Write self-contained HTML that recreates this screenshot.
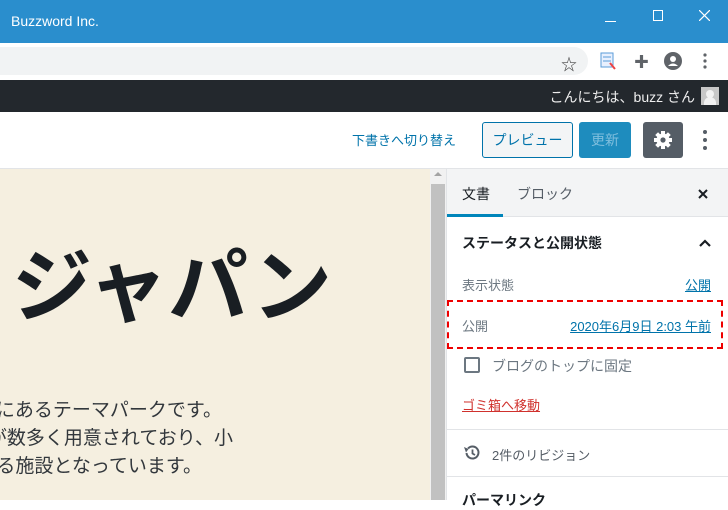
<!DOCTYPE html>
<html><head><meta charset="utf-8"><style>
*{margin:0;padding:0;box-sizing:border-box}
body{width:728px;height:500px;overflow:hidden;position:relative;background:#fff;font-family:"Liberation Sans","Noto Sans CJK JP",sans-serif}
.a{position:absolute}
.title{left:0;top:0;width:728px;height:43px;background:#2a8ecd;color:#fff}
.tool{left:0;top:43px;width:728px;height:37px;background:#fff}
.admin{left:0;top:80px;width:728px;height:32px;background:#23282d;color:#eee;font-size:14px}
.hdr{left:0;top:112px;width:728px;height:57px;background:#fff;border-bottom:1px solid #e2e4e7}
.content{left:0;top:169px;width:430px;height:331px;background:#f5efe0}
.side{left:446px;top:169px;width:282px;height:331px;background:#fff;border-left:1px solid #e2e4e7}
.jp{white-space:nowrap}
</style></head><body>
<div class="a title">
 <div class="a" style="left:11px;top:13px;font-size:14px">Buzzword Inc.</div>
 <div class="a" style="left:605px;top:21px;width:11px;height:1px;background:#fff"></div>
 <div class="a" style="left:653px;top:10px;width:10px;height:11px;border:1px solid #fff"></div>
 <svg class="a" style="left:699px;top:10px" width="11" height="11"><path d="M0 0L11 11M11 0L0 11" stroke="#fff" stroke-width="1.2"/></svg>
</div>
<div class="a tool">
 <div class="a" style="left:-20px;top:4px;width:608px;height:28px;background:#f1f3f4;border-radius:14px"></div>
 <div class="a" style="left:561px;top:8px;font-size:16px;color:#444">☆</div>
 <svg class="a" style="left:600px;top:9px" width="16" height="18"><rect x="1" y="1" width="12" height="14" fill="#e8f0fe" stroke="#5a9bd8"/><line x1="3" y1="5" x2="11" y2="5" stroke="#5a9bd8"/><line x1="3" y1="9" x2="11" y2="9" stroke="#5a9bd8"/><path d="M10 11L15 17" stroke="#e44" stroke-width="2"/></svg>
 <div class="a" style="left:634px;top:8px;font-size:15px;color:#5f6368">✚</div>
 <svg class="a" style="left:664px;top:9px" width="18" height="18"><circle cx="9" cy="9" r="9" fill="#5f6368"/><circle cx="9" cy="7" r="3" fill="#fff"/><path d="M4 14Q9 9 14 14" fill="#fff"/></svg>
 <svg class="a" style="left:703px;top:10px" width="4" height="16"><circle cx="2" cy="2" r="1.6" fill="#5f6368"/><circle cx="2" cy="8" r="1.6" fill="#5f6368"/><circle cx="2" cy="14" r="1.6" fill="#5f6368"/></svg>
</div>
<div class="a admin">
 <div class="a jp" style="right:33px;top:7px">こんにちは、buzz さん</div>
 <div class="a" style="left:701px;top:7px;width:18px;height:18px;background:#c8c8c8"><div class="a" style="left:5px;top:3px;width:8px;height:8px;border-radius:50%;background:#f2f2f2"></div><div class="a" style="left:3px;top:10px;width:12px;height:8px;border-radius:6px 6px 0 0;background:#f2f2f2"></div></div>
</div>
<div class="a hdr">
 <div class="a jp" style="left:352px;top:18px;font-size:13px;color:#0073aa">下書きへ切り替え</div>
 <div class="a jp" style="left:482px;top:10px;width:91px;height:36px;border:1px solid #0073aa;border-radius:3px;background:#f3f5f6;color:#0073aa;font-size:14px;text-align:center;line-height:34px">プレビュー</div>
 <div class="a jp" style="left:579px;top:10px;width:52px;height:36px;border-radius:3px;background:#1e8cbe;color:#7fbedd;font-size:14px;text-align:center;line-height:36px">更新</div>
 <div class="a" style="left:643px;top:10px;width:40px;height:36px;border-radius:3px;background:#555d66"></div>
 <svg class="a" style="left:653px;top:18px" width="20" height="20" viewBox="0 0 20 20"><g fill="#fff"><circle cx="10" cy="10" r="6.5"/><rect x="8" y="1" width="4" height="18"/><rect x="1" y="8" width="18" height="4"/><rect x="8" y="1" width="4" height="18" transform="rotate(45 10 10)"/><rect x="8" y="1" width="4" height="18" transform="rotate(-45 10 10)"/></g><circle cx="10" cy="10" r="2.6" fill="#555d66"/></svg>
 <svg class="a" style="left:703px;top:17px" width="4" height="22"><circle cx="2" cy="3" r="2" fill="#555d66"/><circle cx="2" cy="11" r="2" fill="#555d66"/><circle cx="2" cy="19" r="2" fill="#555d66"/></svg>
</div>
<div class="a content">
 <div class="a jp" style="left:12px;top:64px;font-size:80px;font-weight:bold;color:#191e23;line-height:110px">ジャパン</div>
 <div class="a jp" style="right:208px;top:228px;font-size:19px;color:#32373c;line-height:28px">島にあるテーマパークです。</div>
 <div class="a jp" style="right:197px;top:256px;font-size:19px;color:#32373c;line-height:28px">が数多く用意されており、小</div>
 <div class="a jp" style="right:228px;top:284px;font-size:19px;color:#32373c;line-height:28px">める施設となっています。</div>
</div>
<div class="a" style="left:430px;top:169px;width:16px;height:331px;background:#f1f1f1"></div>
<div class="a" style="left:434px;top:172px;width:0;height:0;border-left:4px solid transparent;border-right:4px solid transparent;border-bottom:4px solid #a3a3a3"></div>
<div class="a" style="left:431px;top:184px;width:14px;height:316px;background:#c1c1c1"></div>
<div class="a side">
 <div class="a" style="left:0;top:0;width:282px;height:48px;background:#f3f4f5;border-bottom:1px solid #e2e4e7"></div>
 <div class="a" style="left:0;top:45px;width:56px;height:3px;background:#0085ba"></div>
 <div class="a jp" style="left:15px;top:15px;font-size:14px;color:#191e23">文書</div>
 <div class="a jp" style="left:70px;top:15px;font-size:14px;color:#555d66">ブロック</div>
 <svg class="a" style="left:251px;top:20px" width="10" height="10"><path d="M1 1L9 9M9 1L1 9" stroke="#191e23" stroke-width="2"/></svg>
 <div class="a jp" style="left:15px;top:64px;font-size:14px;font-weight:bold;color:#191e23">ステータスと公開状態</div>
 <svg class="a" style="left:252px;top:70px" width="12" height="8"><path d="M1 7L6 2L11 7" stroke="#191e23" stroke-width="2.2" fill="none"/></svg>
 <div class="a jp" style="left:15px;top:106px;font-size:13px;color:#6c7781">表示状態</div>
 <div class="a jp" style="right:17px;top:106px;font-size:13px;color:#0073aa;text-decoration:underline">公開</div>
 <div class="a" style="left:0;top:131px;width:276px;height:49px;border:2px dashed #e00"></div>
 <div class="a jp" style="left:15px;top:147px;font-size:13px;color:#6c7781">公開</div>
 <div class="a jp" style="right:17px;top:147px;font-size:13px;color:#0073aa;text-decoration:underline">2020年6月9日 2:03 午前</div>
 <div class="a" style="left:17px;top:188px;width:16px;height:16px;border:2px solid #6c7781;border-radius:2px"></div>
 <div class="a jp" style="left:45px;top:187px;font-size:14px;color:#6c7781">ブログのトップに固定</div>
 <div class="a jp" style="left:15px;top:226px;font-size:13px;color:#d0312d;text-decoration:underline">ゴミ箱へ移動</div>
 <div class="a" style="left:0;top:260px;width:282px;height:1px;background:#e2e4e7"></div>
 <svg class="a" style="left:16px;top:275px" width="18" height="18" viewBox="0 0 18 18"><path d="M3.5 9A6 6 0 1 0 5 4.5" stroke="#555d66" stroke-width="2" fill="none"/><path d="M1 3L5.5 5L3 8.5Z" fill="#555d66"/><path d="M9.5 5.5V9.5L12 11" stroke="#555d66" stroke-width="1.8" fill="none"/></svg>
 <div class="a jp" style="left:45px;top:276px;font-size:13px;color:#555d66">2件のリビジョン</div>
 <div class="a" style="left:0;top:307px;width:282px;height:1px;background:#e2e4e7"></div>
 <div class="a jp" style="left:15px;top:321px;font-size:14px;font-weight:bold;color:#191e23">パーマリンク</div>
</div>
</body></html>
